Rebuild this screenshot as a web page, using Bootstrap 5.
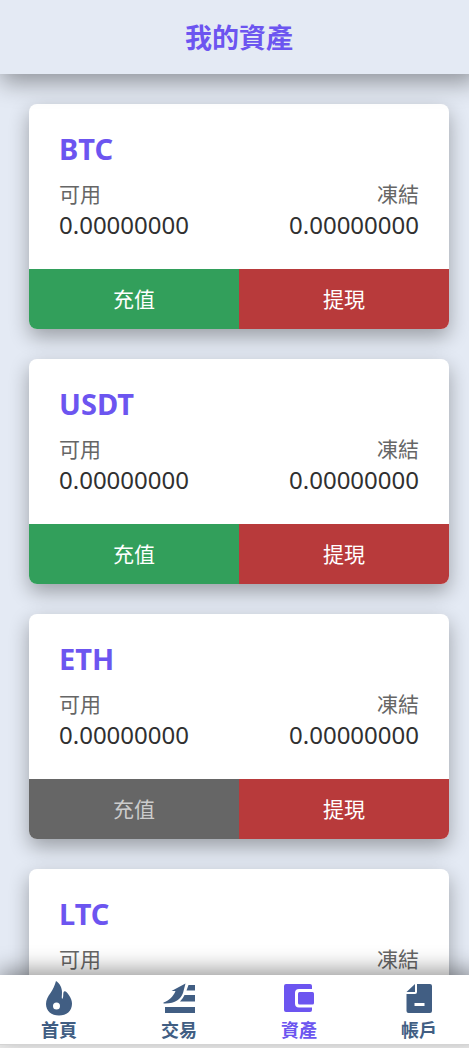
<!DOCTYPE html>
<html lang="zh-Hant">
<head>
<meta charset="utf-8">
<meta name="viewport" content="width=device-width, initial-scale=1">
<title>我的資產</title>
<link rel="stylesheet" href="https://cdn.jsdelivr.net/npm/bootstrap@5.3.0/dist/css/bootstrap.min.css">
<style>
  :root { --accent: #6c55f0; --ink: #415e83; --page: #e4eaf4; }
  body { background: var(--page); color: #303030; font-family: "Noto Sans", "Noto Sans CJK TC", sans-serif; overflow: hidden; }
  .app { height: 100vh; margin: 0 -10px 0 -1px; padding-bottom: 3px; background: #efefef; }
  .app-header { height: 74px; background: var(--page); box-shadow: 0 10px 24px -2px rgba(0,0,0,.38); z-index: 2; padding-top: 2px; }
  .app-header h1 { font-size: 27px; line-height: 36px; color: var(--accent); }
  .wallets { background: var(--page); padding: 30px; gap: 30px; min-height: 0; }
  .wallet { border-radius: 8px; box-shadow: 0 8px 20px rgba(0,0,0,.32); }
  .wallet-body { height: 165px; padding: 25px 30px 0; }
  .wallet h2 { font-size: 29px; line-height: 40px; color: var(--accent); }
  .wallet dt { font-size: 21px; line-height: 30px; margin-top: 10px; color: #666; }
  .wallet dd { font-size: 24px; line-height: 32px; }
  .act { height: 60px; padding: 8px 0 6px; font-size: 21px; color: #fff; border: 0; border-radius: 0; }
  .act:hover, .act:focus { color: #fff; }
  .deposit { background: #329f5b; }
  .withdraw { background: #b83a3b; }
  .act:disabled { background: #666; color: #ccc; opacity: 1; border: 0; }
  .tabs { height: 70px; background: #fff; border-bottom: 1px solid #d4d4d4; box-shadow: 0 -6px 20px rgba(0,0,0,.38); z-index: 2; padding-top: 4px; }
  .tabs a { color: var(--ink); font-size: 18px; line-height: 26px; }
  .tabs a.active { color: var(--accent); }
  .tabs svg { width: 40px; height: 38px; fill: currentColor; }
</style>
</head>
<body>
<div class="app d-flex flex-column">
  <header class="app-header position-relative d-flex align-items-center justify-content-center flex-shrink-0">
    <h1 class="fw-bold m-0">我的資產</h1>
  </header>

  <main class="wallets d-flex flex-column flex-grow-1 overflow-hidden">
    <section class="wallet bg-white overflow-hidden flex-shrink-0">
      <div class="wallet-body">
        <h2 class="fw-bold m-0">BTC</h2>
        <dl class="d-flex justify-content-between m-0">
          <div><dt class="fw-normal">可用</dt><dd class="m-0">0.00000000</dd></div>
          <div class="text-end"><dt class="fw-normal">凍結</dt><dd class="m-0">0.00000000</dd></div>
        </dl>
      </div>
      <div class="d-flex">
        <button type="button" class="btn act deposit w-50">充值</button>
        <button type="button" class="btn act withdraw w-50">提現</button>
      </div>
    </section>

    <section class="wallet bg-white overflow-hidden flex-shrink-0">
      <div class="wallet-body">
        <h2 class="fw-bold m-0">USDT</h2>
        <dl class="d-flex justify-content-between m-0">
          <div><dt class="fw-normal">可用</dt><dd class="m-0">0.00000000</dd></div>
          <div class="text-end"><dt class="fw-normal">凍結</dt><dd class="m-0">0.00000000</dd></div>
        </dl>
      </div>
      <div class="d-flex">
        <button type="button" class="btn act deposit w-50">充值</button>
        <button type="button" class="btn act withdraw w-50">提現</button>
      </div>
    </section>

    <section class="wallet bg-white overflow-hidden flex-shrink-0">
      <div class="wallet-body">
        <h2 class="fw-bold m-0">ETH</h2>
        <dl class="d-flex justify-content-between m-0">
          <div><dt class="fw-normal">可用</dt><dd class="m-0">0.00000000</dd></div>
          <div class="text-end"><dt class="fw-normal">凍結</dt><dd class="m-0">0.00000000</dd></div>
        </dl>
      </div>
      <div class="d-flex">
        <button type="button" class="btn act deposit w-50" disabled>充值</button>
        <button type="button" class="btn act withdraw w-50">提現</button>
      </div>
    </section>

    <section class="wallet bg-white overflow-hidden flex-shrink-0">
      <div class="wallet-body">
        <h2 class="fw-bold m-0">LTC</h2>
        <dl class="d-flex justify-content-between m-0">
          <div><dt class="fw-normal">可用</dt></div>
          <div class="text-end"><dt class="fw-normal">凍結</dt></div>
        </dl>
      </div>
    </section>
  </main>

  <nav class="tabs position-relative d-flex flex-shrink-0">
    <a href="#home" class="w-25 d-flex flex-column align-items-center text-decoration-none fw-bold">
      <svg viewBox="0 0 40 38" aria-hidden="true"><path fill-rule="evenodd" d="M17 2c4 2.500 6 7 6 11.500 0 2.500-.4 5-.1 6 .5.8 1.200-.5 1.300-2.500.1-2.500 0-4.500 1.300-4.800 1.300-.2 3.200 2 4.800 4.500 1.800 2.700 2.700 5.200 2.700 8 0 7.300-5.500 11.800-13 11.800S7 32 7 25c0-4.500 2-7.500 4.500-11C14 10.500 15.500 7 17 2zM17.500 23.500a3.500 3.500 0 1 0 0 7 3.500 3.500 0 0 0 0-7z"/></svg>
      首頁
    </a>
    <a href="#trade" class="w-25 d-flex flex-column align-items-center text-decoration-none fw-bold">
      <svg viewBox="0 0 40 38" aria-hidden="true"><path d="M6 28h30v6H6zM4.500 24.500v-1C10 21.500 14 18 16.500 12h-4L26.500 4.500 24 14C21.500 20.500 16 25 4.500 24.500zM29.500 6H36v5.500h-8.500zM25.500 16H36v6.500H21q3-3 4.500-6.500z"/></svg>
      交易
    </a>
    <a href="#assets" class="active w-25 d-flex flex-column align-items-center text-decoration-none fw-bold" aria-current="page">
      <svg viewBox="0 0 40 38" aria-hidden="true"><path d="M7 5H31q2 0 2 2v3H20q-4 0-4 4v10.500Q16 28.500 20 28.500h13v2.500q0 2-2 2H7q-2 0-2-2V7q0-2 2-2z"/><rect x="19" y="13" width="16" height="12.500" rx="1.500"/></svg>
      資產
    </a>
    <a href="#account" class="w-25 d-flex flex-column align-items-center text-decoration-none fw-bold">
      <svg viewBox="0 0 40 38" aria-hidden="true"><path fill-rule="evenodd" d="M18 5h13q2 0 2 2v25q0 2-2 2H9.500q-2 0-2-2V15H16q2 0 2-2zM15.500 24v3h10v-3z"/><path d="M16 5v8H7.500z"/></svg>
      帳戶
    </a>
  </nav>
</div>
<script src="https://cdn.jsdelivr.net/npm/bootstrap@5.3.0/dist/js/bootstrap.bundle.min.js"></script>
</body>
</html>
